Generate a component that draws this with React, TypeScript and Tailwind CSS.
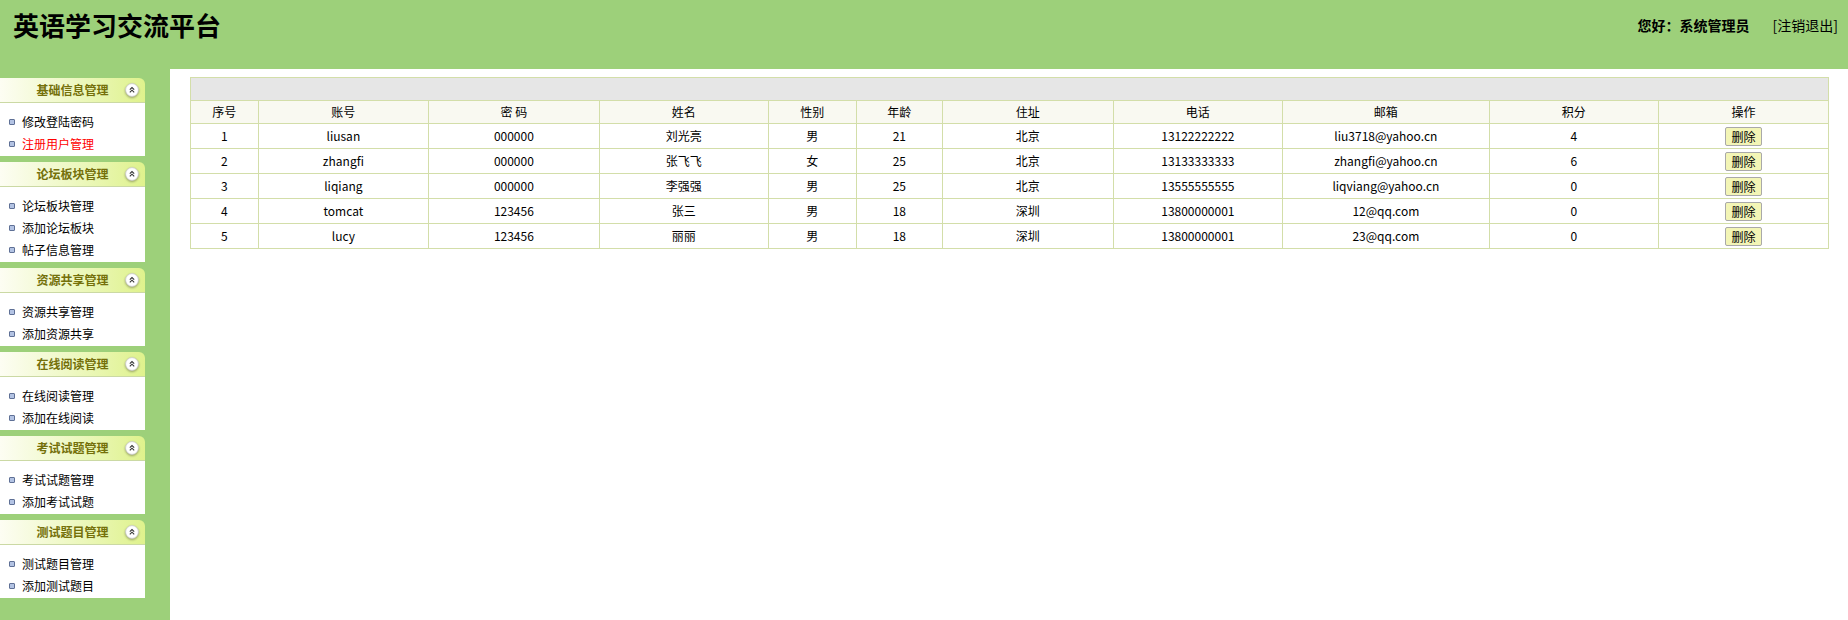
import React from 'react';

interface MenuGroup {
  title: string;
  items: string[];
}

const menus: MenuGroup[] = [
  { title: '基础信息管理', items: ['修改登陆密码', '注册用户管理'] },
  { title: '论坛板块管理', items: ['论坛板块管理', '添加论坛板块', '帖子信息管理'] },
  { title: '资源共享管理', items: ['资源共享管理', '添加资源共享'] },
  { title: '在线阅读管理', items: ['在线阅读管理', '添加在线阅读'] },
  { title: '考试试题管理', items: ['考试试题管理', '添加考试试题'] },
  { title: '测试题目管理', items: ['测试题目管理', '添加测试题目'] },
];

const users = [
  ['1', 'liusan', '000000', '刘光亮', '男', '21', '北京', '13122222222', 'liu3718@yahoo.cn', '4'],
  ['2', 'zhangfi', '000000', '张飞飞', '女', '25', '北京', '13133333333', 'zhangfi@yahoo.cn', '6'],
  ['3', 'liqiang', '000000', '李强强', '男', '25', '北京', '13555555555', 'liqviang@yahoo.cn', '0'],
  ['4', 'tomcat', '123456', '张三', '男', '18', '深圳', '13800000001', '12@qq.com', '0'],
  ['5', 'lucy', '123456', '丽丽', '男', '18', '深圳', '13800000001', '23@qq.com', '0'],
];

const headers = ['序号', '账号', '密 码', '姓名', '性别', '年龄', '住址', '电话', '邮箱', '积分', '操作'];

// collapse button in the panel title
const CollapseIcon: React.FC = () => (
  <svg width="14" height="14" viewBox="0 0 14 14" className="drop-shadow-[0_1px_1px_rgba(0,0,0,0.35)]">
    <circle cx="7" cy="7" r="6.4" fill="#ffffff" stroke="#c9c9c9" strokeWidth="0.8" />
    <polyline points="4.8,6.6 7,4.5 9.2,6.6" fill="none" stroke="#333" strokeWidth="1.1" />
    <polyline points="4.8,9.3 7,7.2 9.2,9.3" fill="none" stroke="#333" strokeWidth="1.1" />
  </svg>
);

const SidePanel: React.FC<{ group: MenuGroup; gi: number }> = ({ group, gi }) => (
  <div className="w-[145px]">
    <div className="relative h-[25px] rounded-tr-[6px] border-b border-[#cbd9a4] bg-gradient-to-r from-[#fdfdf3] to-[#dff28c] flex items-center justify-center">
      <span className="text-[12px] font-bold text-[#74700a]">{group.title}</span>
      <span className="absolute right-[6px] top-[5px] flex">
        <CollapseIcon />
      </span>
    </div>
    <ul className="bg-white pt-[8px] pb-[1px]">
      {group.items.map((it, i) => (
        <li key={it} className="h-[22px] flex items-center pl-[9px] gap-[7px]">
          <span className="w-[6px] h-[6px] rounded-[1px] border border-[#5f7096] bg-[#b3c3e3]" />
          <span className={`text-[12px] ${gi === 0 && i === 1 ? 'text-[#ff0000]' : 'text-black'}`}>{it}</span>
        </li>
      ))}
    </ul>
  </div>
);

const colWidths = ['w-[68px]', 'w-[170px]', 'w-[171px]', 'w-[169px]', 'w-[88px]', 'w-[86px]', 'w-[171px]', 'w-[169px]', 'w-[207px]', 'w-[169px]', 'w-[170px]'];

export default function App() {
  return (
    <div className="min-h-[620px] bg-[#9dd07a] flex flex-col font-['Noto_Sans_CJK_SC','Noto_Sans',sans-serif] text-black">
      <header className="h-[69px] flex items-start justify-between">
        <h1 className="pl-[13px] pt-[11px] text-[26px] leading-[28px] font-bold">英语学习交流平台</h1>
        <div className="pt-[16px] pr-[10px] flex items-center gap-[23px] text-[14px] leading-[18px]">
          <span className="font-bold">您好：系统管理员</span>
          <span className="text-black">[注销退出]</span>
        </div>
      </header>

      <div className="flex flex-1">
        <aside className="w-[170px] pt-[9px] flex flex-col gap-[6px]">
          {menus.map((g, gi) => (
            <SidePanel key={g.title} group={g} gi={gi} />
          ))}
        </aside>

        <main className="flex-1 bg-white pt-[8px] pl-[20px] pr-[19px] min-h-[551px]">
          <table className="w-full table-fixed border-collapse text-[12px] text-center">
            <colgroup>
              {colWidths.map((w, i) => (
                <col key={i} className={w} />
              ))}
            </colgroup>
            <thead>
              <tr>
                <td colSpan={11} className="h-[23px] bg-[#e6e6e6] border border-[#d3dea9]" />
              </tr>
              <tr className="bg-[#f9f9f1]">
                {headers.map((h) => (
                  <th key={h} className="h-[23px] font-normal border border-[#d3dea9] p-0">{h}</th>
                ))}
              </tr>
            </thead>
            <tbody>
              {users.map((u) => (
                <tr key={u[0]}>
                  {u.map((c, i) => (
                    <td key={i} className="h-[25px] border border-[#d3dea9] p-0">{c}</td>
                  ))}
                  <td className="h-[25px] border border-[#d3dea9] p-0">
                    <button className="h-[19px] w-[37px] rounded-[2px] border border-[#a9a9a9] bg-[#f3f5b6] text-[12px] leading-[17px]">删除</button>
                  </td>
                </tr>
              ))}
            </tbody>
          </table>
        </main>
      </div>
    </div>
  );
}
